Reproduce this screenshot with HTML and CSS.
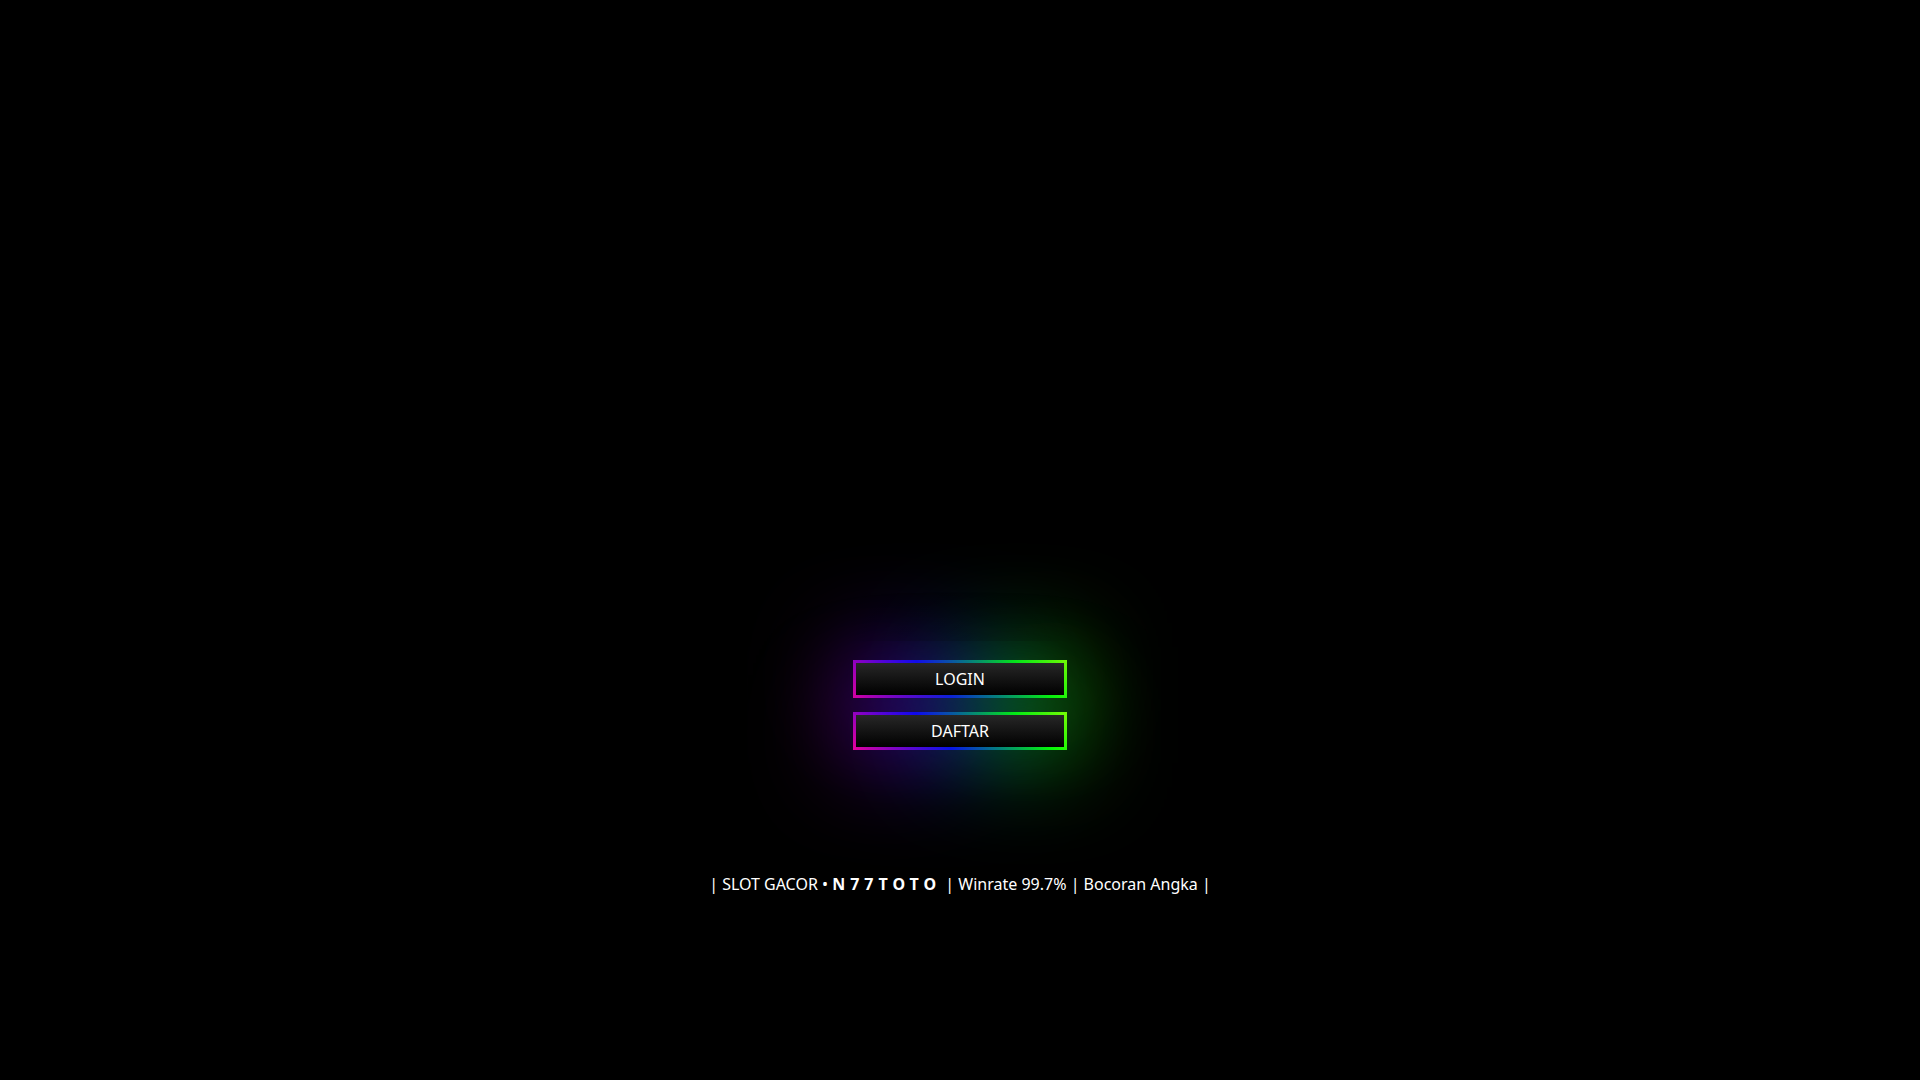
FILE: index.html
```
<!doctype html>
<html lang="id">
<head>
<meta charset="UTF-8"/>
<meta name="viewport" content="width=device-width, initial-scale=1">
<title>N77TOTO</title>
<link rel="stylesheet" href="styles.css">
</head>
<body>
<main class="page">
  <div class="shade"></div>
  <nav class="links">
    <a class="btn" href="#login">LOGIN</a>
    <a class="btn" href="#daftar">DAFTAR</a>
  </nav>
  <p class="info">| SLOT GACOR • <strong class="brand">N77TOTO</strong> | Winrate 99.7% | Bocoran Angka |</p>
</main>
</body>
</html>
```

FILE: styles.css
```
body {
  margin: 0;
  background: #000;
  color: #fff;
  font-family: "Noto Sans", sans-serif;
  font-size: 16px;
  line-height: 24px;
}
.page {
  display: flex;
  flex-direction: column;
  align-items: center;
  padding-top: 593px;
}
/* dims the glow above the buttons */
.shade {
  width: 240px;
  height: 48px;
  margin-bottom: 22px;
  background: linear-gradient(90deg, transparent, rgba(0, 0, 0, .15) 25%, rgba(0, 0, 0, .15) 75%, transparent);
}
.links {
  display: flex;
  flex-direction: column;
  gap: 20px;
  width: 208px;
}
.btn {
  position: relative;
  padding: 4px;
  color: #fff;
  text-align: center;
  text-decoration: none;
  background: linear-gradient(0deg, #000, #272727);
}
/* rainbow frame, and the same thing blurred for the glow */
.btn:before,
.btn:after {
  content: "";
  position: absolute;
  inset: -3px;
  background: linear-gradient(45deg, #fb0094, #0000ff, #00ff00, #ffff00, #ff0000, #fb0094, #0000ff, #00ff00, #ffff00, #ff0000);
  background-size: 400%;
  z-index: -1;
}
.btn:after {
  filter: blur(50px);
}
.info {
  margin: 125px 0 0;
  text-align: center;
}
.brand {
  letter-spacing: 5px;
}
```
